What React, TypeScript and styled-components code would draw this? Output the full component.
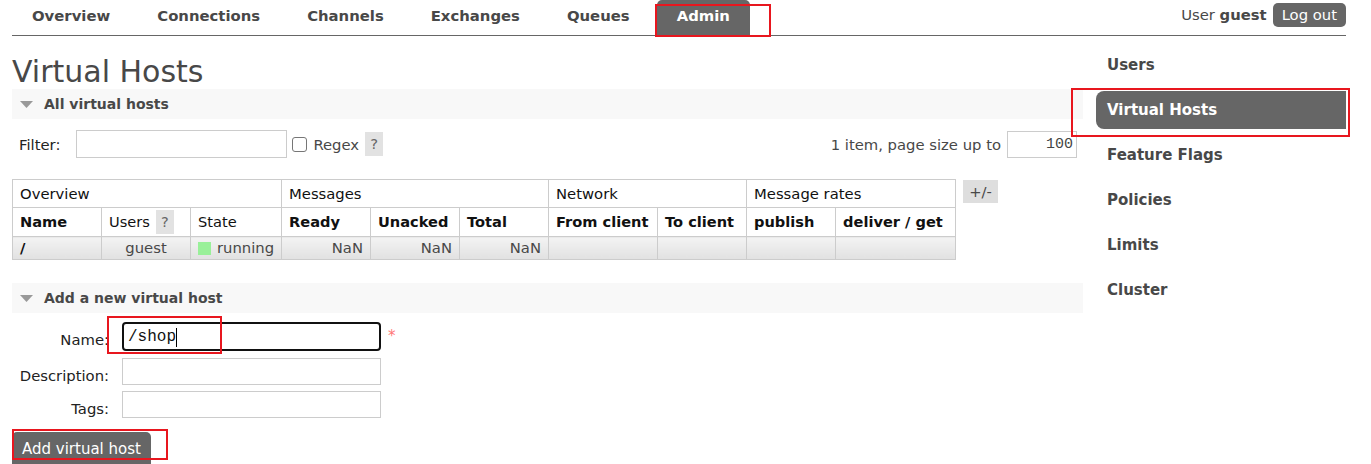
import React from "react";
import styled, { createGlobalStyle } from "styled-components";

const GlobalStyle = createGlobalStyle`
  html, body { margin: 0; padding: 0; background: #fff; overflow: hidden; }
  body {
    font-family: "DejaVu Sans", Verdana, sans-serif;
    font-size: 14.8px;
    color: #484848;
  }
  * { box-sizing: border-box; }
`;

const Page = styled.div`
  width: 1371px;
  height: 464px;
  overflow: hidden;
  padding: 0 25px 0 12px;
`;

const Header = styled.header`
  display: flex;
  justify-content: space-between;
  align-items: flex-start;
  height: 36px;
  border-bottom: 1px solid #666;
`;

const Tabs = styled.ul`
  display: flex;
  gap: 7px;
  margin: 0;
  padding: 0;
  list-style: none;
`;

const Tab = styled.li<{ $active?: boolean }>`
  position: relative;
  height: 35px;
  padding: 7px 20px 0;
  font-size: 14.85px;
  line-height: 18px;
  font-weight: bold;
  color: ${(p) => (p.$active ? "#fff" : "#484848")};
  background: ${(p) => (p.$active ? "#666" : "transparent")};
  border-radius: 5px 5px 0 0;
`;

const UserBox = styled.div`
  display: flex;
  align-items: center;
  gap: 6px;
  padding-top: 3px;
  line-height: 24px;
`;

const UserName = styled.b`
  font-weight: bold;
  color: #484848;
`;

const LogoutButton = styled.button`
  height: 24px;
  padding: 0 9px;
  border: 0;
  border-radius: 5px;
  background: #666;
  color: #fff;
  font-family: inherit;
  font-size: 14.8px;
  line-height: 24px;
`;

const Body = styled.div`
  display: flex;
  gap: 13px;
`;

const Main = styled.main`
  width: 1071px;
`;

const Title = styled.h1`
  margin: 20px 0 1px;
  font-size: 30px;
  line-height: 32px;
  font-weight: normal;
  color: #484848;
`;

const Section = styled.section<{ $gap?: number }>`
  margin-top: ${(p) => p.$gap ?? 0}px;
`;

const SectionHeader = styled.h2`
  display: flex;
  align-items: center;
  gap: 11px;
  height: 30px;
  margin: 0;
  padding-left: 8px;
  background: #f8f8f8;
  font-size: 14px;
  font-weight: bold;
  color: #484848;
`;

const ArrowIcon = () => (
  <svg width="13" height="7" viewBox="0 0 13 7" aria-hidden="true">
    <polygon points="0,0 13,0 6.5,7" fill="#999" />
  </svg>
);

const FilterBar = styled.div`
  display: flex;
  align-items: center;
  height: 30px;
  margin-top: 10px;
  padding: 0 6px 0 7px;
`;

const FilterLabel = styled.label`
  margin-right: 16px;
  color: #222;
`;

const FilterInput = styled.input`
  width: 211px;
  height: 28px;
  border: 1px solid #ccc;
  border-radius: 0;
  padding: 0 4px;
  font-family: inherit;
  font-size: 14.8px;
  outline: none;
`;

const Checkbox = styled.input`
  appearance: none;
  width: 15px;
  height: 15px;
  margin: 0 0 0 5px;
  border: 1px solid #767676;
  border-radius: 3px;
  background: #fff;
`;

const CheckLabel = styled.span`
  margin-left: 6px;
  color: #484848;
`;

const HelpBox = styled.span`
  display: inline-block;
  width: 18px;
  height: 24px;
  margin-left: 6px;
  background: #e2e2e2;
  color: #666;
  text-align: center;
  line-height: 24px;
  font-weight: normal;
  vertical-align: top;
`;

const Spacer = styled.div`
  flex: 1;
`;

const PageInfo = styled.span`
  color: #484848;
`;

const PageSizeInput = styled.input`
  width: 70px;
  height: 27px;
  margin-left: 6px;
  border: 1px solid #ccc;
  padding: 0 3px 0 0;
  text-align: right;
  font-family: "Liberation Mono", "DejaVu Sans Mono", monospace;
  font-size: 15px;
  color: #444;
  outline: none;
`;

const TableRow = styled.div`
  display: flex;
  align-items: flex-start;
  gap: 7px;
  margin-top: 20px;
`;

const List = styled.table`
  width: 943px;
  border-collapse: collapse;
  table-layout: fixed;
`;

const Col = styled.col<{ $w: number }>`
  width: ${(p) => p.$w}px;
`;

const GroupTh = styled.th`
  padding: 5px 7px;
  border: 1px solid #ccc;
  line-height: 17px;
  font-weight: normal;
  text-align: left;
  color: #111;
`;

const HeadTh = styled.th<{ $plain?: boolean }>`
  padding: 2px 7px;
  border: 1px solid #ccc;
  line-height: 24px;
  font-weight: ${(p) => (p.$plain ? "normal" : "bold")};
  font-size: 14.6px;
  text-align: left;
  color: #111;
  white-space: nowrap;
`;

const Td = styled.td<{ $align?: "left" | "center" | "right" }>`
  padding: 2px 7px;
  border: 1px solid #ccc;
  line-height: 18px;
  background: linear-gradient(#f3f3f3, #e1e1e1);
  text-align: ${(p) => p.$align ?? "left"};
  color: #484848;
  white-space: nowrap;
`;

const VhostLink = styled.a`
  font-weight: bold;
  color: #111;
  text-decoration: none;
`;

const StateDot = styled.span`
  display: inline-block;
  width: 13px;
  height: 13px;
  margin-right: 6px;
  background: #99f099;
  vertical-align: -2px;
`;

const ToggleButton = styled.span`
  display: inline-block;
  width: 35px;
  height: 23px;
  margin-top: 1px;
  background: #dedede;
  color: #484848;
  text-align: center;
  line-height: 23px;
`;

const Form = styled.div`
  display: grid;
  grid-template-columns: 97px 259px auto;
  justify-content: start;
  align-items: start;
  column-gap: 13px;
  row-gap: 6.5px;
  margin-top: 9px;
`;

const FieldLabel = styled.label`
  padding-top: 9px;
  line-height: 18px;
  text-align: right;
  color: #222;
  white-space: nowrap;
`;

const NameField = styled.div`
  position: relative;
`;

const NameInput = styled.input`
  display: block;
  width: 259px;
  height: 29px;
  border: 2px solid #111;
  border-radius: 4px;
  padding: 0 4px;
  font-family: "Liberation Mono", "DejaVu Sans Mono", monospace;
  font-size: 16px;
  color: #111;
  outline: none;
`;

const Caret = styled.span`
  position: absolute;
  left: 54px;
  top: 6px;
  width: 1px;
  height: 19px;
  background: #000;
`;

const FormInput = styled.input`
  display: block;
  width: 259px;
  height: 27px;
  border: 1px solid #ccc;
  padding: 0 4px;
  font-family: inherit;
  font-size: 14.8px;
  outline: none;
`;

const Required = styled.span`
  margin-left: -6px;
  padding-top: 5px;
  line-height: 18px;
  color: #f77;
  font-size: 15px;
`;

const Empty = styled.span``;

const ButtonRow = styled.div`
  position: relative;
  margin-top: 14px;
`;

const SubmitButton = styled.button`
  height: 34px;
  padding: 0 10px;
  border: 0;
  border-radius: 5px 5px 0 0;
  background: #666;
  color: #fff;
  font-family: inherit;
  font-size: 15px;
`;

const Sidebar = styled.nav`
  display: flex;
  flex-direction: column;
  gap: 7px;
  width: 250px;
  margin-top: 10px;
`;

const SideItem = styled.a<{ $active?: boolean }>`
  position: relative;
  display: block;
  height: 38px;
  padding-left: 11px;
  line-height: 38px;
  font-size: 15px;
  font-weight: bold;
  text-decoration: none;
  color: ${(p) => (p.$active ? "#fff" : "#484848")};
  background: ${(p) => (p.$active ? "#666" : "transparent")};
  border-radius: 8px 0 0 8px;
`;

/* red annotation frames drawn over the screenshot */
const Mark = styled.span`
  position: absolute;
  border: 2px solid #e8161e;
  pointer-events: none;
  z-index: 5;
`;

const AdminMark = styled(Mark)`
  left: -2px;
  top: 4px;
  width: 116px;
  height: 33px;
`;

const SideMark = styled(Mark)`
  left: -25px;
  top: -3px;
  width: 279px;
  height: 49px;
`;

const NameMark = styled(Mark)`
  left: -15px;
  top: -6px;
  width: 115px;
  height: 38px;
`;

const ButtonMark = styled(Mark)`
  left: 0;
  top: -3px;
  width: 156px;
  height: 31px;
`;

const tabs = ["Overview", "Connections", "Channels", "Exchanges", "Queues", "Admin"];
const sideItems = ["Users", "Virtual Hosts", "Feature Flags", "Policies", "Limits", "Cluster"];
const colWidths = [89, 89, 91, 89, 89, 89, 109, 89, 89, 120];

export default function App() {
  return (
    <>
      <GlobalStyle />
      <Page>
        <Header>
          <Tabs>
            {tabs.map((t) => (
              <Tab key={t} $active={t === "Admin"}>
                {t}
                {t === "Admin" && <AdminMark />}
              </Tab>
            ))}
          </Tabs>
          <UserBox>
            <span>
              User <UserName>guest</UserName>
            </span>
            <LogoutButton>Log out</LogoutButton>
          </UserBox>
        </Header>
        <Body>
          <Main>
            <Title>Virtual Hosts</Title>
            <Section>
              <SectionHeader>
                <ArrowIcon />
                All virtual hosts
              </SectionHeader>
              <FilterBar>
                <FilterLabel>Filter:</FilterLabel>
                <FilterInput type="text" />
                <Checkbox type="checkbox" />
                <CheckLabel>Regex</CheckLabel>
                <HelpBox>?</HelpBox>
                <Spacer />
                <PageInfo>1 item, page size up to</PageInfo>
                <PageSizeInput type="text" defaultValue="100" />
              </FilterBar>
              <TableRow>
                <List>
                  <colgroup>
                    {colWidths.map((w, i) => (
                      <Col key={i} $w={w} />
                    ))}
                  </colgroup>
                  <thead>
                    <tr>
                      <GroupTh colSpan={3}>Overview</GroupTh>
                      <GroupTh colSpan={3}>Messages</GroupTh>
                      <GroupTh colSpan={2}>Network</GroupTh>
                      <GroupTh colSpan={2}>Message rates</GroupTh>
                    </tr>
                    <tr>
                      <HeadTh>Name</HeadTh>
                      <HeadTh $plain>
                        Users<HelpBox>?</HelpBox>
                      </HeadTh>
                      <HeadTh $plain>State</HeadTh>
                      <HeadTh>Ready</HeadTh>
                      <HeadTh>Unacked</HeadTh>
                      <HeadTh>Total</HeadTh>
                      <HeadTh>From client</HeadTh>
                      <HeadTh>To client</HeadTh>
                      <HeadTh>publish</HeadTh>
                      <HeadTh>deliver / get</HeadTh>
                    </tr>
                  </thead>
                  <tbody>
                    <tr>
                      <Td>
                        <VhostLink href="#">/</VhostLink>
                      </Td>
                      <Td $align="center">guest</Td>
                      <Td>
                        <StateDot />
                        running
                      </Td>
                      <Td $align="right">NaN</Td>
                      <Td $align="right">NaN</Td>
                      <Td $align="right">NaN</Td>
                      <Td />
                      <Td />
                      <Td />
                      <Td />
                    </tr>
                  </tbody>
                </List>
                <ToggleButton>+/-</ToggleButton>
              </TableRow>
            </Section>
            <Section $gap={23}>
              <SectionHeader>
                <ArrowIcon />
                Add a new virtual host
              </SectionHeader>
              <Form>
                <FieldLabel>Name:</FieldLabel>
                <NameField>
                  <NameInput type="text" defaultValue="/shop" />
                  <Caret />
                  <NameMark />
                </NameField>
                <Required>*</Required>
                <FieldLabel>Description:</FieldLabel>
                <FormInput type="text" />
                <Empty />
                <FieldLabel>Tags:</FieldLabel>
                <FormInput type="text" />
                <Empty />
              </Form>
              <ButtonRow>
                <SubmitButton>Add virtual host</SubmitButton>
                <ButtonMark />
              </ButtonRow>
            </Section>
          </Main>
          <Sidebar>
            {sideItems.map((s) => (
              <SideItem key={s} href="#" $active={s === "Virtual Hosts"}>
                {s}
                {s === "Virtual Hosts" && <SideMark />}
              </SideItem>
            ))}
          </Sidebar>
        </Body>
      </Page>
    </>
  );
}
